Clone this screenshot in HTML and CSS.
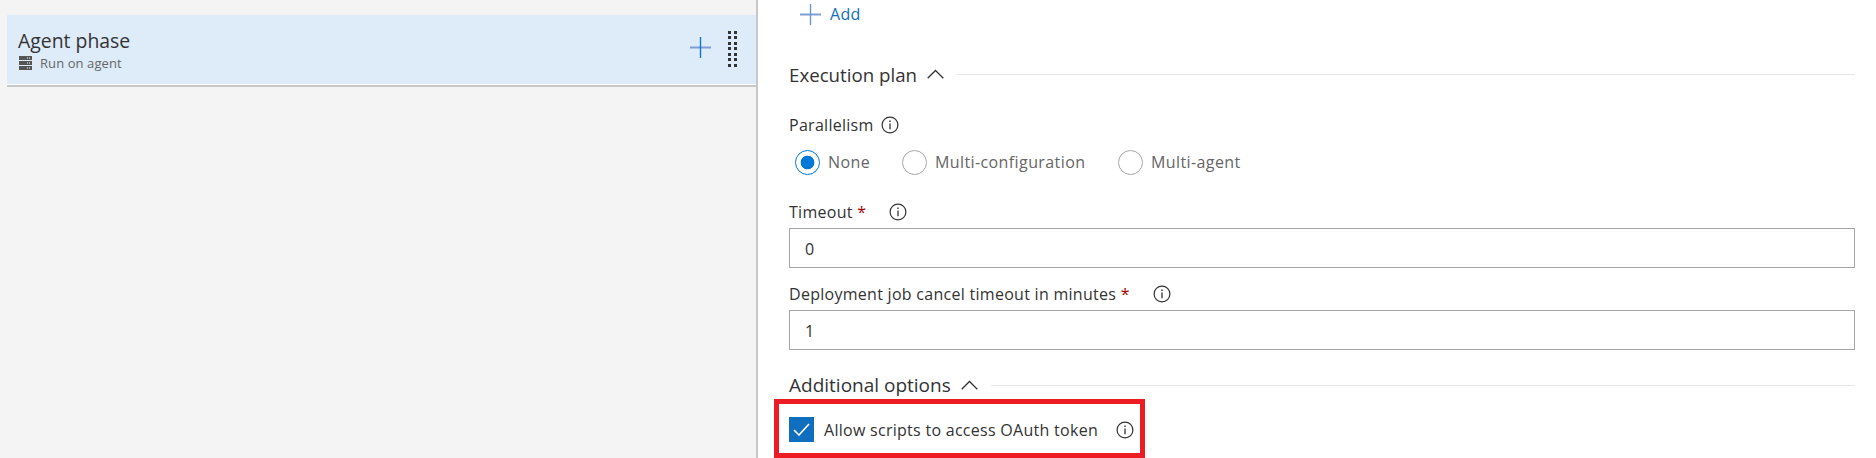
FILE: index.html
```html
<!DOCTYPE html>
<html lang="en">
<head>
<meta charset="utf-8">
<title>Agent phase</title>
<link rel="stylesheet" href="styles.css">
</head>
<body>
<div class="page">
  <aside class="left">
    <div class="card">
      <div class="card-text">
        <div class="card-title">Agent phase</div>
        <div class="card-sub">
          <svg class="server" width="13" height="14" viewBox="0 0 13 14"><rect width="13" height="4" fill="#555"/><rect y="5" width="13" height="4" fill="#555"/><rect y="10" width="13" height="4" fill="#555"/><path d="M8 2h1M10 2h1M8 7h1M10 7h1M8 12h1M10 12h1" stroke="#fff" stroke-width="1"/></svg>
          <span>Run on agent</span>
        </div>
      </div>
      <svg class="plus card-plus" width="21" height="21" viewBox="0 0 21 21"><path d="M0 10.5h21" stroke="#7f9dd6" stroke-width="2"/><path d="M10.5 0v21" stroke="#0b78d0" stroke-width="1.4"/></svg>
      <div class="grip">
        <i></i><i></i><i></i><i></i><i></i><i></i><i></i><i></i><i></i><i></i><i></i><i></i><i></i><i></i>
      </div>
    </div>
  </aside>
  <main class="right">
    <div class="add">
      <svg class="plus" width="21" height="21" viewBox="0 0 21 21"><path d="M0 10.5h21" stroke="#7f9dd6" stroke-width="2"/><path d="M10.5 0v21" stroke="#6f94d2" stroke-width="1.4"/></svg>
      <span>Add</span>
    </div>
    <div class="heading heading-exec">
      <span>Execution plan</span>
      <svg class="chev" width="17" height="10" viewBox="0 0 17 10"><path d="M0.7 9.3 8.5 1.5l7.8 7.8" fill="none" stroke="#333" stroke-width="1.3"/></svg>
      <div class="rule"></div>
    </div>
    <div class="label label-par">
      <span>Parallelism</span>
      <svg class="info info-par" width="18" height="18" viewBox="0 0 18 18"><circle cx="9" cy="9" r="7.9" fill="none" stroke="#333" stroke-width="1.2"/><path d="M9 7.6v5.6" stroke="#333" stroke-width="1.3"/><path d="M9 4.4v1.6" stroke="#333" stroke-width="1.4"/></svg>
    </div>
    <div class="radios">
      <label class="radio radio-1"><span class="dot on"></span><span>None</span></label>
      <label class="radio radio-2"><span class="dot"></span><span>Multi-configuration</span></label>
      <label class="radio"><span class="dot"></span><span>Multi-agent</span></label>
    </div>
    <div class="label label-time">
      <span>Timeout <b class="req">*</b></span>
      <svg class="info info-time" width="18" height="18" viewBox="0 0 18 18"><circle cx="9" cy="9" r="7.9" fill="none" stroke="#333" stroke-width="1.2"/><path d="M9 7.6v5.6" stroke="#333" stroke-width="1.3"/><path d="M9 4.4v1.6" stroke="#333" stroke-width="1.4"/></svg>
    </div>
    <div class="input">0</div>
    <div class="label label-dep">
      <span>Deployment job cancel timeout in minutes <b class="req">*</b></span>
      <svg class="info info-dep" width="18" height="18" viewBox="0 0 18 18"><circle cx="9" cy="9" r="7.9" fill="none" stroke="#333" stroke-width="1.2"/><path d="M9 7.6v5.6" stroke="#333" stroke-width="1.3"/><path d="M9 4.4v1.6" stroke="#333" stroke-width="1.4"/></svg>
    </div>
    <div class="input">1</div>
    <div class="heading heading-add">
      <span>Additional options</span>
      <svg class="chev" width="17" height="10" viewBox="0 0 17 10"><path d="M0.7 9.3 8.5 1.5l7.8 7.8" fill="none" stroke="#333" stroke-width="1.3"/></svg>
      <div class="rule"></div>
    </div>
    <div class="callout">
      <span class="check"><svg width="17" height="13" viewBox="0 0 17 13"><path d="M1 7l5 5L16 1" fill="none" stroke="#fff" stroke-width="1.6"/></svg></span>
      <span class="check-text">Allow scripts to access OAuth token</span>
      <svg class="info info-check" width="18" height="18" viewBox="0 0 18 18"><circle cx="9" cy="9" r="7.9" fill="none" stroke="#333" stroke-width="1.2"/><path d="M9 7.6v5.6" stroke="#333" stroke-width="1.3"/><path d="M9 4.4v1.6" stroke="#333" stroke-width="1.4"/></svg>
    </div>
  </main>
</div>
</body>
</html>
```

FILE: styles.css
```css
* { box-sizing: border-box; }
html, body { margin: 0; padding: 0; background: #fff; }
body {
  font-family: "Open Sans", "Noto Sans", sans-serif;
  color: #333;
  font-size: 16px;
  letter-spacing: 0.28px;
}
.page { display: flex; width: 1876px; height: 458px; overflow: hidden; }

.left {
  width: 758px;
  flex: none;
  background: #f4f4f4;
  border-right: 2px solid #c8c8c8;
  padding: 15px 0 0 7px;
}
.card {
  display: flex;
  align-items: center;
  height: 72px;
  padding: 0 19px 3px 11px;
  background: #deebf9;
  border-bottom: 2px solid #c8c8c8;
  box-shadow: inset 0 -1px 0 #fff;
}
.card-text { flex: 1; }
.card-title { font-size: 19.4px; line-height: 26px; margin-top: 2px; letter-spacing: 0; }
.card-sub { display: flex; align-items: center; gap: 8px; font-size: 13px; line-height: 18px; letter-spacing: 0.08px; color: #666; padding-left: 1px; }
.server { flex: none; }
.plus { display: block; flex: none; }
.card-plus { margin: 0 17px 2px 0; }
.grip { display: grid; grid-template-columns: 3px 3px; column-gap: 3px; row-gap: 2.5px; }
.grip i { display: block; width: 3px; height: 3px; background: #333; }

.right { flex: 1; padding: 0 21px 0 31px; min-width: 0; }
.add { display: flex; align-items: center; gap: 9px; height: 28px; margin-left: 11px; color: #106ebe; }
.heading { display: flex; align-items: center; height: 28px; font-size: 19px; letter-spacing: 0; }
.heading-exec { margin-top: 32px; font-size: 18.7px; }
.heading-add { margin-top: 21px; }
.chev { margin-left: 10px; flex: none; }
.rule { flex: 1; height: 1px; margin-left: 13px; background: #e6e6e6; }
.label { display: flex; align-items: center; height: 24px; }
.label-par { margin-top: 25px; }
.label-time { margin-top: 25px; }
.label-dep { margin-top: 14px; }
.info { flex: none; }
.info-par { margin-left: 7px; }
.info-time { margin-left: 23px; }
.info-dep { margin-left: 23px; }
.req { font-weight: 400; color: #a80000; }
.radios { display: flex; height: 26px; margin-top: 12px; margin-left: 6px; color: #666; letter-spacing: 0.4px; }
.radio { display: flex; align-items: center; gap: 8px; }
.radio-1 { width: 107px; }
.radio-2 { width: 216px; }
.dot { display: block; width: 25px; height: 25px; border-radius: 50%; border: 1px solid #a6a6a6; background: #fff; flex: none; }
.dot.on { border-color: #0078d7; background: radial-gradient(circle, #0078d7 0 6.5px, #fff 7.2px); }
.input {
  height: 40px;
  margin-top: 4px;
  padding-left: 15px;
  line-height: 40px;
  border: 1px solid #a6a6a6;
  background: #fff;
}
.callout {
  display: flex;
  align-items: center;
  width: 371px;
  height: 59px;
  margin-left: -15px;
  padding: 2px 0 0 10px;
  border: 5px solid #ed1c24;
}
.check { display: flex; align-items: center; justify-content: center; width: 25px; height: 25px; background: #106ebe; flex: none; }
.check-text { margin-left: 10px; white-space: nowrap; }
.info-check { margin-left: 18px; }
```
